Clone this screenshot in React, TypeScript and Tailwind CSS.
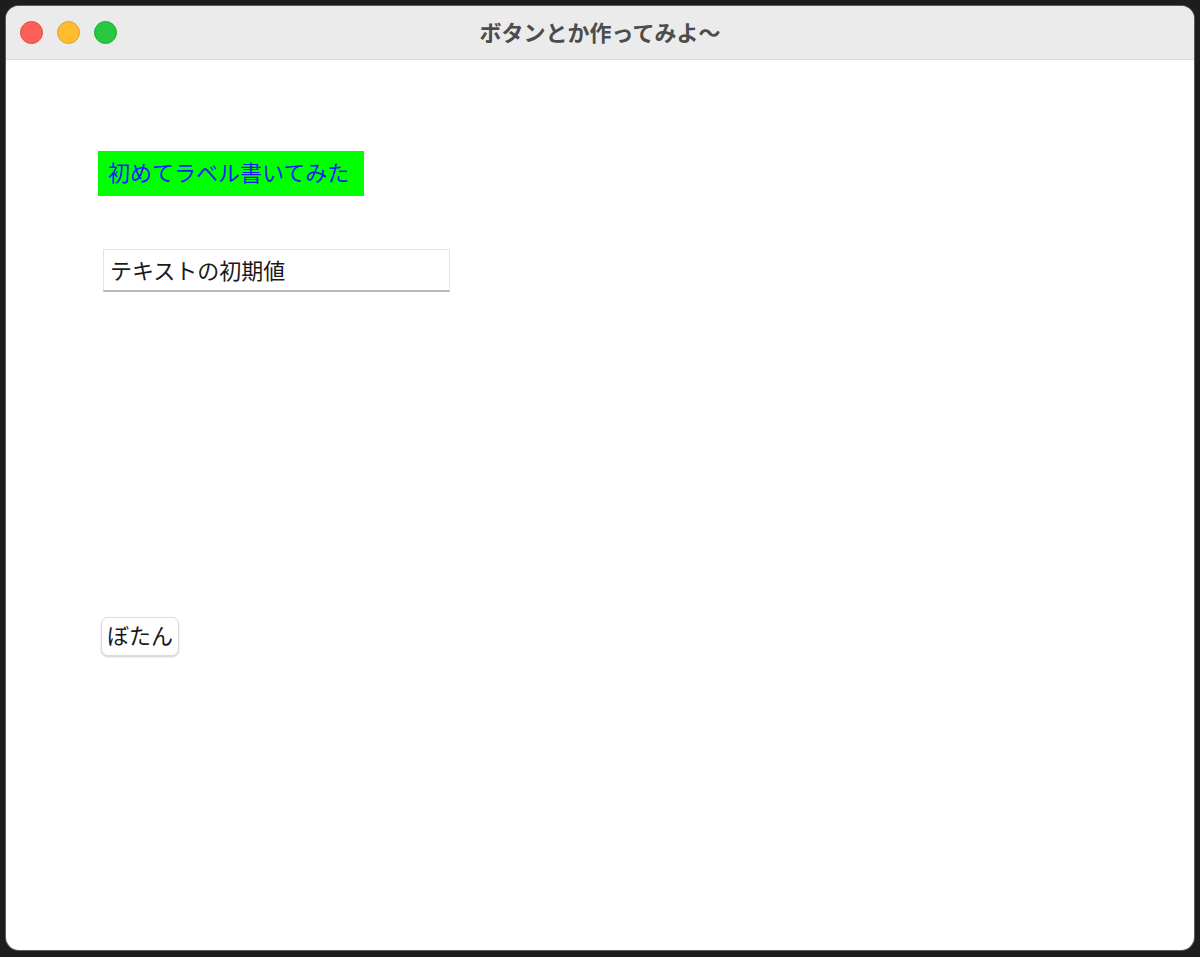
import React from "react";

export default function App() {
  const jp = { fontFamily: '"Noto Sans CJK JP", "Noto Sans", sans-serif' };
  return (
    <div className="w-[1200px] h-[957px] bg-[#1d1d1d] pt-[6px] pl-[6px]" style={jp}>
      <div className="w-[1188px] h-[944px] bg-white rounded-[13px] overflow-hidden flex flex-col ring-1 ring-[#5c5c5c]">
        <div className="h-[54px] bg-[#ebebeb] border-b border-[#d9d9d9] flex items-center relative shrink-0">
          <div className="flex items-center gap-[14px] pl-[14px]">
            <div className="w-[23px] h-[23px] rounded-full bg-[#fe5f57] border border-[#e5463f]" />
            <div className="w-[23px] h-[23px] rounded-full bg-[#febc2e] border border-[#e1a325]" />
            <div className="w-[23px] h-[23px] rounded-full bg-[#28c840] border border-[#1eac2d]" />
          </div>
          <div className="absolute inset-0 flex items-center justify-center pointer-events-none">
            <span className="text-[22px] font-bold text-[#4c4c4c] leading-none pb-[3px]">ボタンとか作ってみよ〜</span>
          </div>
        </div>
        <div className="flex-1 flex flex-col items-start pl-[92px] pt-[91px]">
          <div className="h-[45px] w-[266px] bg-[#00ff00] flex items-center pl-[10px] pb-[6px] text-[22px] text-[#1a1aff] leading-none">
            初めてラベル書いてみた
          </div>
          <div className="mt-[53px] ml-[5px] h-[43px] w-[347px] border border-[#e2e2e2] border-b-[#b9b9b9] border-b-2 flex items-center pl-[6px] pb-[3px] text-[22px] text-[#1a1a1a] leading-none">
            テキストの初期値
          </div>
          <button className="mt-[325px] ml-[3px] h-[39px] w-[78px] rounded-[7px] bg-white border border-[#dcdcdc] shadow-[0_1px_2px_rgba(0,0,0,0.2)] flex items-center justify-center pb-[6px] text-[22px] text-[#1a1a1a] leading-none">
            ぼたん
          </button>
        </div>
      </div>
    </div>
  );
}
